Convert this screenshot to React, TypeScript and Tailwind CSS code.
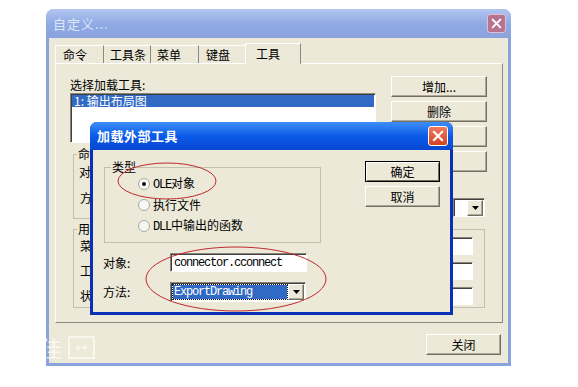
import React from 'react';

const raised =
  'bg-[#ece9d8] border border-t-white border-l-white border-r-[#716f64] border-b-[#716f64] shadow-[inset_-1px_-1px_0_#aca899]';
const sunken =
  'bg-white border border-t-[#8a877a] border-l-[#8a877a] border-r-white border-b-white shadow-[inset_1px_1px_0_#404040]';

function Btn({ label, def = false, w = 'w-[96px]' }: { label: React.ReactNode; def?: boolean; w?: string }) {
  return (
    <div
      className={
        def
          ? `${w} h-[21px] flex items-center justify-center bg-[#ece9d8] border border-black shadow-[inset_1px_1px_0_#fff,inset_-1px_-1px_0_#716f64]`
          : `${w} h-[21px] flex items-center justify-center ${raised}`
      }
    >
      {label}
    </div>
  );
}

function Arrow() {
  return (
    <svg width="7" height="4" viewBox="0 0 7 4">
      <path d="M0 0h7L3.5 4z" fill="#000" />
    </svg>
  );
}

function CloseX({ size }: { size: number }) {
  return (
    <svg width={size} height={size} viewBox="0 0 10 10">
      <path d="M1.5 1.5l7 7M8.5 1.5l-7 7" stroke="#fff" strokeWidth="1.8" strokeLinecap="round" />
    </svg>
  );
}

function Radio({ checked, children }: { checked?: boolean; children: React.ReactNode }) {
  return (
    <div className="h-[21px] flex items-center gap-[3px]">
      <svg width="12" height="12" viewBox="0 0 12 12">
        <circle cx="6" cy="6" r="5.5" fill="#f7f7f4" stroke="#a9a9a2" />
        {checked && <circle cx="6" cy="6" r="2" fill="#111" />}
      </svg>
      <span>{children}</span>
    </div>
  );
}

const mono = "font-['Liberation_Mono',monospace] text-[12px] tracking-[-1.2px]";

export default function App() {
  return (
    <div className="relative w-[578px] h-[387px] bg-white overflow-hidden font-['Noto_Sans_CJK_SC',sans-serif] text-[12px] leading-[14px] text-black">
      <div className="pt-[9px] pl-[46px]">
        {/* outer window (inactive) */}
        <div className="w-[465px] h-[357px] flex flex-col rounded-t-[8px] bg-[#8aa3df] px-[3px] pb-[3px]">
          <div className="-mx-[3px] h-[29px] flex items-center justify-between pl-[7px] pr-[5px] rounded-t-[8px] bg-gradient-to-b from-[#b3c6f0] via-[#90aae5] to-[#8aa3df]">
            <span className="text-[13px] text-[#dce6f8] tracking-[1px]">自定义...</span>
            <div className="w-[19px] h-[19px] rounded-[3px] bg-[#b7738f] border border-[#d9c3d3] flex items-center justify-center">
              <CloseX size={11} />
            </div>
          </div>

          <div className="flex-1 bg-[#ece9d8] pt-[6px] px-[6px] flex flex-col">
            {/* tabs */}
            <div className="h-[19px] flex items-end">
              <div className="w-[49px] h-[18px] pl-[7px] pt-[2px] border-t border-l border-r border-t-white border-l-white border-r-[#8c8a80]">命令</div>
              <div className="w-[47px] h-[18px] pl-[6px] pt-[2px] border-t border-r border-t-white border-r-[#8c8a80]">工具条</div>
              <div className="w-[48px] h-[18px] pl-[6px] pt-[2px] border-t border-r border-t-white border-r-[#8c8a80]">菜单</div>
              <div className="w-[48px] h-[18px] pl-[7px] pt-[2px] border-t border-t-white">键盘</div>
              <div className="relative z-10 -ml-[2px] w-[56px] h-[21px] -mb-[1px] pl-[10px] pt-[3px] bg-[#ece9d8] border-t border-l border-r border-t-white border-l-white border-r-[#8c8a80]">工具</div>
            </div>

            {/* tab panel */}
            <div className="w-[448px] h-[260px] border border-t-white border-l-white border-r-[#8c8a80] border-b-[#8c8a80] pt-[12px] pl-[14px]">
              <div className="flex">
                <div className="w-[306px] pt-[1px]">
                  <div className="h-[16px] leading-[16px]">选择加载工具:</div>
                  <div className={`h-[50px] ${sunken} p-[1px]`}>
                    <div className="h-[12px] bg-[#316ac5] text-white leading-[12px] pl-[2px]">1: 输出布局图</div>
                  </div>
                  <div className="relative ml-[3px] mt-[11px] h-[65px] border border-[#c3c0b0]">
                    <span className="absolute -top-[8px] left-[3px] bg-[#ece9d8] px-[1px]">命令</span>
                    <div className="pl-[5px] pt-[10px]">对象:</div>
                    <div className="pl-[6px] pt-[12px]">方法:</div>
                  </div>
                </div>
                <div className="ml-[15px] flex flex-col gap-[4px]">
                  <Btn label="增加..." />
                  <Btn label="删除" />
                  <Btn label="" />
                  <Btn label="" />
                  <div className={`mt-[22px] ml-[62px] w-[32px] h-[19px] flex ${sunken}`}>
                    <div className="flex-1" />
                    <div className={`w-[16px] h-[16px] mt-[1px] mr-[1px] flex items-center justify-center ${raised}`}>
                      <Arrow />
                    </div>
                  </div>
                </div>
              </div>

              <div className="relative ml-[3px] mt-[10px] w-[412px] h-[79px] border border-[#c3c0b0] pt-[7px] pr-[11px] flex flex-col gap-[7px]">
                <span className="absolute -top-[8px] left-[3px] bg-[#ece9d8] px-[1px]">用户</span>
                {['菜', '工', '状'].map((t) => (
                  <div key={t} className="h-[18px] flex items-center justify-between pl-[6px]">
                    <span>{t}</span>
                    <div className={`w-[320px] h-[18px] ${sunken}`} />
                  </div>
                ))}
              </div>
            </div>

            <div className="mt-[11px] flex justify-end pr-[1px]">
              <Btn label="关闭" w="w-[75px]" />
            </div>
          </div>
        </div>
      </div>

      {/* inner dialog */}
      <div className="absolute left-[90px] top-[122px] w-[363px] h-[193px] flex flex-col rounded-t-[7px] bg-[#0a30b8] px-[3px] pb-[3px]">
        <div className="-mx-[3px] h-[28px] flex items-center justify-between pl-[7px] pr-[5px] rounded-t-[7px] bg-gradient-to-b from-[#3d8ef7] via-[#0a5ae8] to-[#0747d0]">
          <span className="text-[13px] font-bold text-white tracking-[0.5px]">加载外部工具</span>
          <div className="w-[20px] h-[20px] rounded-[3px] bg-gradient-to-b from-[#ee7a5c] to-[#d2401f] border border-white flex items-center justify-center">
            <CloseX size={12} />
          </div>
        </div>
        <div className="flex-1 bg-[#ece9d8] flex flex-col">
          <div className="flex items-start">
            <div className="relative ml-[11px] mt-[17px] w-[217px] h-[76px] border border-[#c3c0b0] pt-[5px] pl-[33px]">
              <span className="absolute -top-[8px] left-[6px] bg-[#ece9d8] px-[1px]">类型</span>
              <Radio checked>
                <span className={mono}>OLE</span>对象
              </Radio>
              <Radio>执行文件</Radio>
              <Radio>
                <span className={mono}>DLL</span>中输出的函数
              </Radio>
            </div>
            <div className="ml-[44px] mt-[11px] flex flex-col gap-[4px]">
              <Btn label="确定" def w="w-[75px]" />
              <Btn label="取消" w="w-[75px]" />
            </div>
          </div>

          <div className="mt-[10px] pl-[10px] flex items-center">
            <span className="w-[67px]">对象:</span>
            <div className={`w-[137px] h-[19px] ${sunken} flex items-center pl-[3px]`}>
              <span className={mono}>connector.cconnect</span>
            </div>
          </div>
          <div className="mt-[10px] pl-[10px] flex items-center">
            <span className="w-[67px]">方法:</span>
            <div className={`w-[136px] h-[20px] ${sunken} flex items-center pl-[2px] pr-[1px]`}>
              <div className="flex-1 h-[14px] bg-[#316ac5] outline-1 outline-dotted outline-[#1b1b1b] flex items-center pl-[1px] text-white">
                <span className={mono}>ExportDrawing</span>
              </div>
              <div className={`ml-[1px] w-[16px] h-[16px] flex items-center justify-center ${raised}`}>
                <Arrow />
              </div>
            </div>
          </div>
        </div>
      </div>

      {/* red annotation marks */}
      <svg className="absolute inset-0 pointer-events-none" width="578" height="387" viewBox="0 0 578 387">
        <ellipse cx="167" cy="181" rx="49" ry="18" fill="none" stroke="#c0282c" strokeWidth="1" />
        <ellipse cx="236" cy="279" rx="90" ry="32" fill="none" stroke="#c0282c" strokeWidth="1" />
      </svg>

      {/* faint watermark */}
      <div className="absolute left-[40px] top-[335px] flex items-center gap-[6px] text-white/70">
        <span className="text-[22px] leading-[24px]">佳</span>
        <div className="w-[27px] h-[23px] border-2 border-white/60 flex items-center justify-center text-[11px] font-bold">++</div>
      </div>
    </div>
  );
}
